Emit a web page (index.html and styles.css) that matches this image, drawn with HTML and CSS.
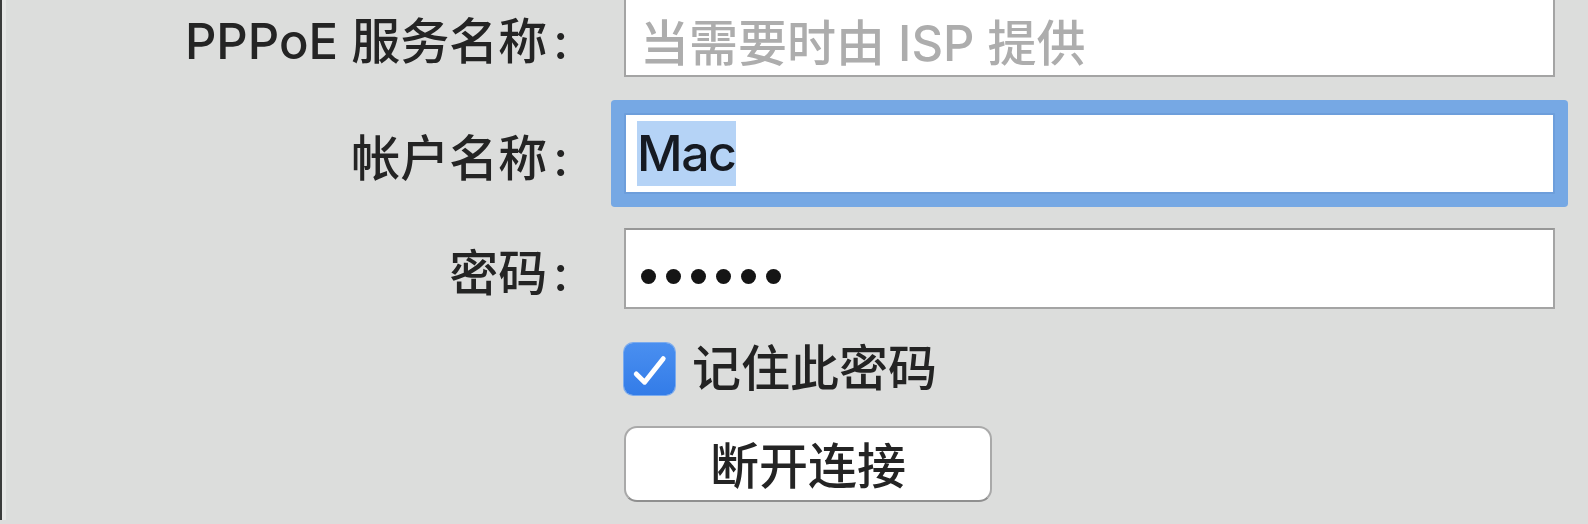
FILE: index.html
```html
<!DOCTYPE html>
<html lang="zh-CN">
<head>
<meta charset="utf-8">
<title>PPPoE</title>
<link rel="stylesheet" href="styles.css">
</head>
<body>
<div class="window">
  <div class="form">
    <div class="row row-first">
      <div class="label">PPPoE 服务名称<span class="colon">:</span></div>
      <div class="field"><span class="placeholder">当需要时由 ISP 提供</span></div>
    </div>
    <div class="row row-account">
      <div class="label">帐户名称<span class="colon">:</span></div>
      <div class="field focused"><span class="value selected">Mac</span></div>
    </div>
    <div class="row row-password">
      <div class="label">密码<span class="colon">:</span></div>
      <div class="field">
        <span class="dots"><i></i><i></i><i></i><i></i><i></i><i></i></span>
      </div>
    </div>
    <div class="row row-check">
      <div class="label"></div>
      <div class="check">
        <span class="checkbox">
          <svg viewBox="0 0 52 52" width="52" height="52"><path d="M12.5 31 L21 39.5 L40 15.5" fill="none" stroke="#ffffff" stroke-width="5" stroke-linecap="round" stroke-linejoin="round"/></svg>
        </span>
        <span class="check-text">记住此密码</span>
      </div>
    </div>
    <div class="row row-button">
      <div class="label"></div>
      <div class="actions"><button class="button" type="button">断开连接</button></div>
    </div>
  </div>
</div>
</body>
</html>
```
FILE: styles.css
```css
html, body {
  margin: 0;
  padding: 0;
  height: 100%;
  overflow: hidden;
}
body {
  background: #dcdddc;
  font-family: "Inter", "Noto Sans CJK SC", sans-serif;
  color: #262626;
}
.window {
  height: 100%;
  border-left: 2px solid #3a3b3b;
  box-shadow: inset 4px 0 0 #e6e7e6;
  box-sizing: border-box;
}
.form {
  display: flex;
  flex-direction: column;
  margin-top: -4px;
}
.row {
  display: grid;
  grid-template-columns: 566px 931px;
  column-gap: 56px;
  align-items: center;
}
.row-account { margin-top: 36px; }
.row-password { margin-top: 34px; }
.row-check { margin-top: 30px; }
.row-button { margin-top: 27px; }
.label {
  text-align: right;
  font-size: 49px;
  font-weight: 500;
  line-height: 60px;
  padding-top: 10px;
  color: #242424;
  white-space: nowrap;
}
.colon {
  margin-left: 6px;
}
.field {
  box-sizing: border-box;
  height: 81px;
  background: #ffffff;
  border: 2px solid #a4a4a4;
  border-top-color: #979797;
  padding: 0 11px;
  display: flex;
  align-items: center;
  font-size: 50px;
}
.placeholder {
  color: #adadad;
  font-size: 49px;
  font-weight: 500;
  padding-left: 3px;
  padding-top: 6px;
  white-space: nowrap;
}
.field.focused {
  border-color: #6d9edb;
  box-shadow: 0 0 0 13px #76a8e4;
  border-radius: 1px;
}
.value {
  color: #161a22;
  font-weight: 500;
  letter-spacing: -1.5px;
  padding-right: 1px;
  line-height: 65px;
}
.selected {
  background: #b5d3f6;
}
.dots {
  display: flex;
  gap: 10px;
  padding-left: 4px;
  margin-top: 16px;
}
.dots i {
  width: 15px;
  height: 15px;
  border-radius: 50%;
  background: #151515;
}
.check {
  display: flex;
  align-items: center;
  gap: 17px;
}
.checkbox {
  width: 51px;
  height: 52px;
  border-radius: 9px;
  background: linear-gradient(#4a8ff0, #337ce8);
  box-shadow: 0 0 0 1px #7aabef;
  display: flex;
}
.check-text {
  font-size: 49px;
  font-weight: 500;
  line-height: 60px;
  color: #232323;
}
.actions {
  display: flex;
}
.button {
  width: 368px;
  height: 76px;
  box-sizing: border-box;
  background: #ffffff;
  border: 2px solid #a9a9a9;
  border-bottom-color: #8f8f8f;
  border-radius: 13px;
  font-family: "Inter", "Noto Sans CJK SC", sans-serif;
  font-size: 49px;
  font-weight: 500;
  color: #242424;
  padding: 4px 0 0;
  line-height: 1;
}
```
